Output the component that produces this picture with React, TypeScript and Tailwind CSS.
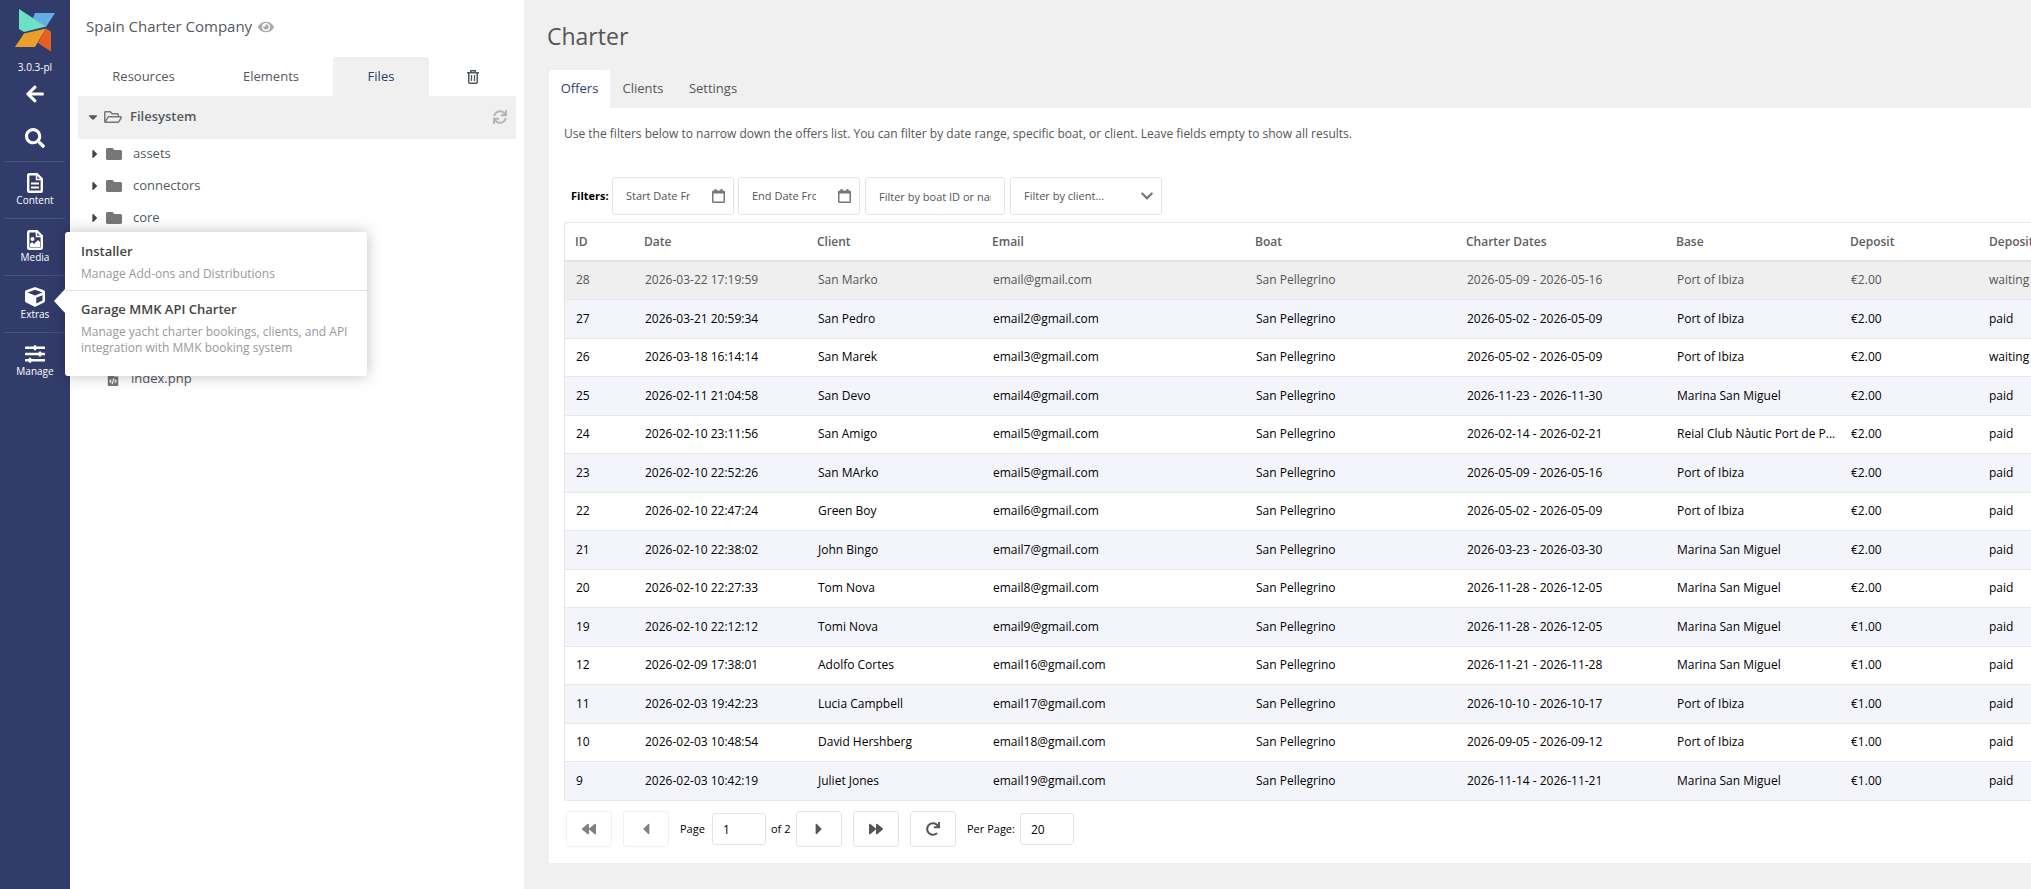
import { useState } from 'react';
import type { ReactNode } from 'react';
import {
  FaArrowLeft,
  FaSearch,
  FaCube,
  FaSlidersH,
  FaEye,
  FaRegFolderOpen,
  FaFolder,
  FaCaretDown,
  FaCaretRight,
  FaCaretLeft,
  FaBackward,
  FaForward,
  FaSync,
  FaRedo,
  FaFileCode,
  FaChevronDown,
} from 'react-icons/fa';

const offers = [
  { id: 28, date: '2026-03-22 17:19:59', client: 'San Marko', email: 'email@gmail.com', dates: '2026-05-09 - 2026-05-16', base: 'Port of Ibiza', deposit: '€2.00', status: 'waiting' },
  { id: 27, date: '2026-03-21 20:59:34', client: 'San Pedro', email: 'email2@gmail.com', dates: '2026-05-02 - 2026-05-09', base: 'Port of Ibiza', deposit: '€2.00', status: 'paid' },
  { id: 26, date: '2026-03-18 16:14:14', client: 'San Marek', email: 'email3@gmail.com', dates: '2026-05-02 - 2026-05-09', base: 'Port of Ibiza', deposit: '€2.00', status: 'waiting' },
  { id: 25, date: '2026-02-11 21:04:58', client: 'San Devo', email: 'email4@gmail.com', dates: '2026-11-23 - 2026-11-30', base: 'Marina San Miguel', deposit: '€2.00', status: 'paid' },
  { id: 24, date: '2026-02-10 23:11:56', client: 'San Amigo', email: 'email5@gmail.com', dates: '2026-02-14 - 2026-02-21', base: 'Reial Club Nàutic Port de P...', deposit: '€2.00', status: 'paid' },
  { id: 23, date: '2026-02-10 22:52:26', client: 'San MArko', email: 'email5@gmail.com', dates: '2026-05-09 - 2026-05-16', base: 'Port of Ibiza', deposit: '€2.00', status: 'paid' },
  { id: 22, date: '2026-02-10 22:47:24', client: 'Green Boy', email: 'email6@gmail.com', dates: '2026-05-02 - 2026-05-09', base: 'Port of Ibiza', deposit: '€2.00', status: 'paid' },
  { id: 21, date: '2026-02-10 22:38:02', client: 'John Bingo', email: 'email7@gmail.com', dates: '2026-03-23 - 2026-03-30', base: 'Marina San Miguel', deposit: '€2.00', status: 'paid' },
  { id: 20, date: '2026-02-10 22:27:33', client: 'Tom Nova', email: 'email8@gmail.com', dates: '2026-11-28 - 2026-12-05', base: 'Marina San Miguel', deposit: '€2.00', status: 'paid' },
  { id: 19, date: '2026-02-10 22:12:12', client: 'Tomi Nova', email: 'email9@gmail.com', dates: '2026-11-28 - 2026-12-05', base: 'Marina San Miguel', deposit: '€1.00', status: 'paid' },
  { id: 12, date: '2026-02-09 17:38:01', client: 'Adolfo Cortes', email: 'email16@gmail.com', dates: '2026-11-21 - 2026-11-28', base: 'Marina San Miguel', deposit: '€1.00', status: 'paid' },
  { id: 11, date: '2026-02-03 19:42:23', client: 'Lucia Campbell', email: 'email17@gmail.com', dates: '2026-10-10 - 2026-10-17', base: 'Port of Ibiza', deposit: '€1.00', status: 'paid' },
  { id: 10, date: '2026-02-03 10:48:54', client: 'David Hershberg', email: 'email18@gmail.com', dates: '2026-09-05 - 2026-09-12', base: 'Port of Ibiza', deposit: '€1.00', status: 'paid' },
  { id: 9, date: '2026-02-03 10:42:19', client: 'Juliet Jones', email: 'email19@gmail.com', dates: '2026-11-14 - 2026-11-21', base: 'Marina San Miguel', deposit: '€1.00', status: 'paid' },
];

const columns = [
  { name: 'ID', width: 'w-[69px]' },
  { name: 'Date', width: 'w-[173px]' },
  { name: 'Client', width: 'w-[175px]' },
  { name: 'Email', width: 'w-[263px]' },
  { name: 'Boat', width: 'w-[211px]' },
  { name: 'Charter Dates', width: 'w-[210px]' },
  { name: 'Base', width: 'w-[174px]' },
  { name: 'Deposit', width: 'w-[139px]' },
  { name: 'Deposit', width: 'w-[140px]' },
];

function Logo() {
  return (
    <svg width="42" height="44" viewBox="0 0 42 44" aria-label="MODX">
      <path d="M21 4h20l-9 14-13-9z" fill="#63ace5" />
      <path d="M5 0l27 17.500-22 5.500-5-3z" fill="#6fe0c8" />
      <path d="M10 24.500l22-5-11 18.500H1z" fill="#eb9e2a" />
      <path d="M32 19.500l5 3v20l-13-8.500z" fill="#e85f24" />
    </svg>
  );
}

function FileIcon({ children }: { children: ReactNode }) {
  return (
    <svg width="16" height="20" viewBox="0 0 16 20" fill="none" stroke="currentColor" strokeWidth="2.400">
      <path d="M1.200 2.200a1 1 0 0 1 1-1H10l4.800 4.800v11.800a1 1 0 0 1-1 1H2.200a1 1 0 0 1-1-1z" />
      <path d="M9.500 1v5.500H15" strokeWidth="1.500" />
      {children}
    </svg>
  );
}

function TrashIcon() {
  return (
    <svg width="12" height="14" viewBox="0 0 12 14" fill="none" stroke="currentColor" strokeWidth="1.500">
      <path d="M0 2.750h12M3.750 2.500V.75h4.500V2.500M1.750 3v9.250a1 1 0 0 0 1 1h6.500a1 1 0 0 0 1-1V3" />
      <path d="M4.500 5v6M7.500 5v6" strokeWidth="1.300" />
    </svg>
  );
}

function CalendarIcon() {
  return (
    <svg width="13" height="14" viewBox="0 0 13 14" fill="none" stroke="currentColor" className="ml-auto text-[#777]">
      <rect x="0.750" y="2.250" width="11.500" height="11" rx="0.800" strokeWidth="1.500" />
      <path d="M0.500 3.500h12M3.500 0v3M9.500 0v3" strokeWidth="2" />
    </svg>
  );
}

function NavItem({ label, icon }: { label: string; icon: ReactNode }) {
  return (
    <li className="border-t border-[#47517f]">
      <button type="button" className="flex h-14 w-full flex-col items-center pt-[11px] text-white">
        <span className="flex h-5 items-center">{icon}</span>
        <span className="text-[10px] leading-[15px]">{label}</span>
      </button>
    </li>
  );
}

function Navbar() {
  return (
    <nav className="relative flex w-[70px] shrink-0 flex-col items-center bg-[#323c6b] px-[5px] pt-[9px] text-white" aria-label="Main">
      <a href="#home" className="flex flex-col items-center">
        <Logo />
        <span className="mt-1.5 text-[10px] leading-4">3.0.3-pl</span>
      </a>
      <button type="button" aria-label="Back" className="mt-[9px] flex h-5 items-center">
        <FaArrowLeft className="size-5" />
      </button>
      <button type="button" aria-label="Search" className="mt-6 flex h-5 items-center">
        <FaSearch className="size-5" />
      </button>
      <ul className="mt-[13px] w-full">
        <NavItem
          label="Content"
          icon={
            <FileIcon>
              <path d="M4 10.500h8M4 14.500h8" strokeWidth="2" />
            </FileIcon>
          }
        />
        <NavItem
          label="Media"
          icon={
            <FileIcon>
              <circle cx="5.500" cy="9" r="2" fill="currentColor" stroke="none" />
              <path d="M3 17v-3l2-2 2 2 4-4 2 2v5z" fill="currentColor" stroke="none" />
            </FileIcon>
          }
        />
        <NavItem label="Extras" icon={<FaCube className="size-5" />} />
        <NavItem label="Manage" icon={<FaSlidersH className="size-5" />} />
      </ul>

      {/* Extras submenu */}
      <div className="absolute top-[232px] left-[65px] z-10 w-[302px] rounded-[3px] bg-white shadow-[0_0_15px_rgba(0,0,0,0.25)]">
        <div className="absolute top-[57px] -left-[11px] border-y-[12px] border-r-[11px] border-y-transparent border-r-white" />
        <a href="#installer" className="block h-[59px] border-b border-[#e4e4e4] pt-2.5 pr-2 pl-4">
          <span className="block text-[13px] leading-[18px] font-semibold text-[#444]">Installer</span>
          <span className="mt-1.5 block text-xs leading-4 text-[#999]">Manage Add-ons and Distributions</span>
        </a>
        <a href="#charter" className="block h-[85px] pt-[9px] pr-2 pl-4">
          <span className="block text-[13px] leading-[18px] font-semibold text-[#444]">Garage MMK API Charter</span>
          <span className="mt-1.5 block text-xs leading-4 text-[#999]">
            Manage yacht charter bookings, clients, and API integration with MMK booking system
          </span>
        </a>
      </div>
    </nav>
  );
}

function TreePanel() {
  return (
    <aside className="w-[454px] shrink-0 bg-white px-2 text-[#53595f]">
      <h2 className="flex h-[57px] items-center gap-1.5 px-2 pb-1 text-[15px]">
        Spain Charter Company
        <FaEye className="size-4 text-[#aaa]" />
      </h2>
      <div className="flex h-[39px] text-[13px]">
        <button type="button" className="w-[131px]">Resources</button>
        <button type="button" className="w-[124px]">Elements</button>
        <button type="button" className="w-24 rounded-t-[3px] bg-[#f0f0f0] text-[#323c6b]">Files</button>
        <button type="button" aria-label="Trash" className="flex flex-1 items-center justify-center">
          <TrashIcon />
        </button>
      </div>
      <div className="flex h-[43px] items-center bg-[#f0f0f0] px-2 pb-0.5 text-[13px] font-semibold">
        <FaCaretDown className="size-3.5" />
        <FaRegFolderOpen className="ml-1 size-[18px] text-[#777]" />
        <span className="ml-2">Filesystem</span>
        <button type="button" aria-label="Refresh" className="mr-px ml-auto text-[#b5b5b5]">
          <FaSync className="size-3.5" />
        </button>
      </div>
      <ul className="text-[13px]">
        {['assets', 'connectors', 'core'].map((name) => (
          <li key={name} className="flex h-8 items-center pb-0.5 pl-2.5">
            <FaCaretRight className="size-3.5 text-[#3d464d]" />
            <FaFolder className="ml-1 size-4 text-[#777]" />
            <span className="ml-[11px]">{name}</span>
          </li>
        ))}
        <li className="mt-32 flex h-8 items-center pl-7">
          <FaFileCode className="size-3.5 text-[#777]" />
          <span className="ml-[11px]">index.php</span>
        </li>
      </ul>
    </aside>
  );
}

function DateField({ label, placeholder }: { label: string; placeholder: string }) {
  return (
    <div className="flex h-[38px] w-[122px] items-center rounded-[3px] border border-[#e4e4e4] bg-white pr-2 pl-[13px]">
      <input type="text" aria-label={label} placeholder={placeholder} className="w-16 text-[11px] outline-none placeholder:text-[#555]" />
      <CalendarIcon />
    </div>
  );
}

function Filters() {
  return (
    <div className="flex items-center pl-[7px]">
      <span className="w-[41px] text-[11px] font-bold text-black">Filters:</span>
      <DateField label="Start date from" placeholder="Start Date From" />
      <div className="ml-1">
        <DateField label="End date from" placeholder="End Date From" />
      </div>
      <div className="ml-[5px] h-[38px] w-[140px] rounded-[3px] border border-[#e4e4e4] px-[13px]">
        <input type="text" aria-label="Boat" placeholder="Filter by boat ID or name" className="h-full w-full text-[11px] outline-none placeholder:text-[#555]" />
      </div>
      <div className="relative ml-[5px]">
        <select aria-label="Client" className="h-[38px] w-[152px] appearance-none rounded-[3px] border border-[#e4e4e4] pl-[13px] text-[11px] text-[#555]">
          <option>Filter by client...</option>
        </select>
        <FaChevronDown className="pointer-events-none absolute top-3 right-2 size-3.5 text-[#777]" />
      </div>
    </div>
  );
}

function OffersTable() {
  return (
    <div className="mt-[7px] overflow-hidden rounded-l-[3px] border border-r-0 border-[#e4e6eb]">
      <table className="w-[1554px] table-fixed border-collapse text-left text-xs whitespace-nowrap">
        <thead>
          <tr className="h-[38px] border-b-2 border-[#e4e4e4] text-[#606060]">
            {columns.map((column, i) => (
              <th key={i} className={`${column.width} pl-2.5 font-semibold`}>
                {column.name}
              </th>
            ))}
          </tr>
        </thead>
        <tbody>
          {offers.map((offer, i) => (
            <tr
              key={offer.id}
              className={`h-[38px] border-b border-[#e6e8ea] last:border-b-0 even:h-[39px] even:bg-[#f4f5fa] ${
                i === 0 ? 'bg-[#efefef] text-[#555]' : 'text-black'
              }`}
            >
              <td className="pl-[11px]">{offer.id}</td>
              <td className="pl-[11px]">{offer.date}</td>
              <td className="pl-[11px]">{offer.client}</td>
              <td className="pl-[11px]">{offer.email}</td>
              <td className="pl-[11px]">San Pellegrino</td>
              <td className="pl-[11px]">{offer.dates}</td>
              <td className="pl-[11px]">{offer.base}</td>
              <td className="pl-[11px]">{offer.deposit}</td>
              <td className="pl-2.5">{offer.status}</td>
            </tr>
          ))}
        </tbody>
      </table>
    </div>
  );
}

function PageButton({ label, disabled, children }: { label: string; disabled?: boolean; children: ReactNode }) {
  return (
    <button
      type="button"
      aria-label={label}
      disabled={disabled}
      className="flex h-9 w-[46px] items-center justify-center rounded-[3px] border border-[#e4e4e4] bg-white text-[#555] disabled:border-[#f1f1f1] disabled:text-[#808080]"
    >
      {children}
    </button>
  );
}

function Pagination() {
  const [page, setPage] = useState('1');
  const [perPage, setPerPage] = useState('20');

  return (
    <div className="flex items-center pt-2.5 pl-0.5 text-xs text-black">
      <div className="flex gap-[11px]">
        <PageButton label="First page" disabled>
          <FaBackward className="size-3.5" />
        </PageButton>
        <PageButton label="Previous page" disabled>
          <FaCaretLeft className="size-[18px]" />
        </PageButton>
      </div>
      <label htmlFor="page" className="ml-[11px] w-8 text-[11px]">Page</label>
      <input
        id="page"
        value={page}
        onChange={(e) => setPage(e.target.value)}
        className="h-8 w-[54px] rounded-[3px] border border-[#e4e4e4] pl-2.5"
      />
      <span className="ml-[5px] w-[25px] text-[11px]">of 2</span>
      <div className="flex gap-[11px]">
        <PageButton label="Next page">
          <FaCaretRight className="size-[18px]" />
        </PageButton>
        <PageButton label="Last page">
          <FaForward className="size-3.5" />
        </PageButton>
        <PageButton label="Refresh">
          <FaRedo className="size-3.5" />
        </PageButton>
      </div>
      <label htmlFor="per-page" className="ml-[11px] w-[53px] text-[11px]">Per Page:</label>
      <input
        id="per-page"
        value={perPage}
        onChange={(e) => setPerPage(e.target.value)}
        className="h-8 w-[54px] rounded-[3px] border border-[#e4e4e4] pl-2.5"
      />
    </div>
  );
}

export default function App() {
  return (
    <div className="flex min-h-screen overflow-hidden bg-[#f0f0f0] font-['Segoe_UI','Open_Sans',sans-serif] text-[#555]">
      <Navbar />
      <TreePanel />
      <main className="min-w-0 flex-1 pl-[25px]">
        <h1 className="-ml-0.5 pt-5 text-[23px] leading-8">Charter</h1>
        <div className="mt-[18px] flex h-[38px] text-[13px]">
          <button type="button" className="w-[61px] rounded-t-[3px] bg-white text-[#323c6b]">Offers</button>
          <button type="button" className="w-[66px]">Clients</button>
          <button type="button" className="w-[74px]">Settings</button>
        </div>
        <section className="bg-white pb-4 pl-[15px]">
          <p className="pt-4 pb-[33px] text-xs leading-5">
            Use the filters below to narrow down the offers list. You can filter by date range, specific boat, or client. Leave fields empty to show all results.
          </p>
          <Filters />
          <OffersTable />
          <Pagination />
        </section>
      </main>
    </div>
  );
}
